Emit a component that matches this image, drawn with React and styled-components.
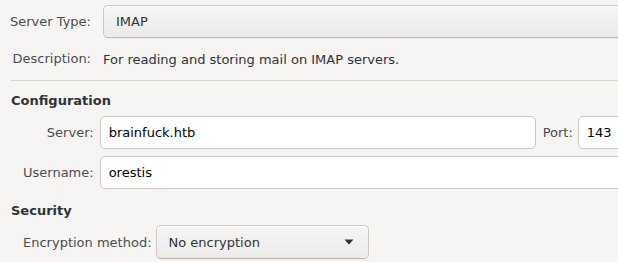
import styled, { createGlobalStyle } from "styled-components";

const GlobalStyle = createGlobalStyle`
  html, body {
    margin: 0;
    padding: 0;
    background: #f6f5f4;
    overflow: hidden;
  }
  body {
    font-family: "DejaVu Sans", "Liberation Sans", sans-serif;
    font-size: 13px;
    color: #2e3436;
  }
`;

// the dialog is wider than the shot, so the right-hand fields run off the edge
const Page = styled.div`
  width: 618px;
  height: 262px;
  padding-top: 5px;
  box-sizing: border-box;
  background: #f6f5f4;
  overflow: hidden;
`;

const TopGrid = styled.div`
  display: grid;
  grid-template-columns: 91px 1fr;
  grid-auto-rows: 33px;
  column-gap: 12px;
  row-gap: 4px;
  align-items: center;
  width: 660px;
`;

const Label = styled.span`
  color: #4a4d4e;
  text-align: right;
  white-space: nowrap;
  padding-right: ${(p) => p.$pad || 0}px;
`;

const Value = styled.span`
  color: #2e3436;
  white-space: nowrap;
  padding-top: ${(p) => p.$top || 0}px;
`;

const ComboButton = styled.div`
  display: flex;
  align-items: center;
  justify-content: space-between;
  box-sizing: border-box;
  height: ${(p) => p.$h || 33}px;
  width: ${(p) => (p.$w ? `${p.$w}px` : "auto")};
  flex: none;
  padding: 0 14px 0 12px;
  border: 1px solid #cdc7c2;
  border-bottom-color: #bfb8b1;
  border-radius: 5px;
  background: linear-gradient(to bottom, #f6f5f4, #edebe9);
  color: #2e3436;
  box-shadow: inset 0 1px #ffffff, 0 1px rgba(0, 0, 0, 0.04);
`;

const Separator = styled.hr`
  margin: 5px 0 0 11px;
  border: 0;
  border-top: 1px solid #d8d4d0;
  height: 0;
`;

const Heading = styled.h3`
  margin: ${(p) => p.$top}px 0 0 11px;
  font-size: 13px;
  font-weight: bold;
  line-height: 20px;
  color: #2e3436;
`;

const FormGrid = styled.div`
  display: grid;
  grid-template-columns: auto 1fr;
  grid-auto-rows: 33px;
  row-gap: 7px;
  align-items: center;
  margin: 5px 0 0 23px;
  width: 640px;
`;

const FieldRow = styled.div`
  display: flex;
  align-items: center;
`;

const Entry = styled.div`
  box-sizing: border-box;
  height: 33px;
  width: ${(p) => (p.$w ? `${p.$w}px` : "100%")};
  flex: ${(p) => (p.$w ? "none" : "1")};
  display: flex;
  align-items: center;
  padding-left: 8px;
  background: #ffffff;
  border: 1px solid #cdc7c2;
  border-radius: 5px;
  color: #000000;
`;

const PortLabel = styled.span`
  color: #4a4d4e;
  margin: 0 5px 0 7px;
`;

const SecurityRow = styled.div`
  display: flex;
  align-items: center;
  gap: 4px;
  margin: 4px 0 0 23px;
`;

function Arrow() {
  return (
    <svg width="10" height="6" viewBox="0 0 10 6">
      <path d="M0.5 0.5 L9.5 0.5 L5 5.5 Z" fill="#2e3436" />
    </svg>
  );
}

export default function App() {
  return (
    <Page>
      <GlobalStyle />
      <TopGrid>
        <Label>Server Type:</Label>
        <ComboButton>
          <Value>IMAP</Value>
        </ComboButton>
        <Label>Description:</Label>
        <Value $top={2}>For reading and storing mail on IMAP servers.</Value>
      </TopGrid>
      <Separator />

      <Heading $top={10}>Configuration</Heading>
      <FormGrid>
        <Label $pad={6}>Server:</Label>
        <FieldRow>
          <Entry $w={436}>brainfuck.htb</Entry>
          <PortLabel>Port:</PortLabel>
          <Entry $w={90}>143</Entry>
        </FieldRow>
        <Label $pad={6}>Username:</Label>
        <Entry>orestis</Entry>
      </FormGrid>

      <Heading $top={12}>Security</Heading>
      <SecurityRow>
        <Label>Encryption method:</Label>
        <ComboButton $w={213} $h={34}>
          <Value>No encryption</Value>
          <Arrow />
        </ComboButton>
      </SecurityRow>
    </Page>
  );
}
